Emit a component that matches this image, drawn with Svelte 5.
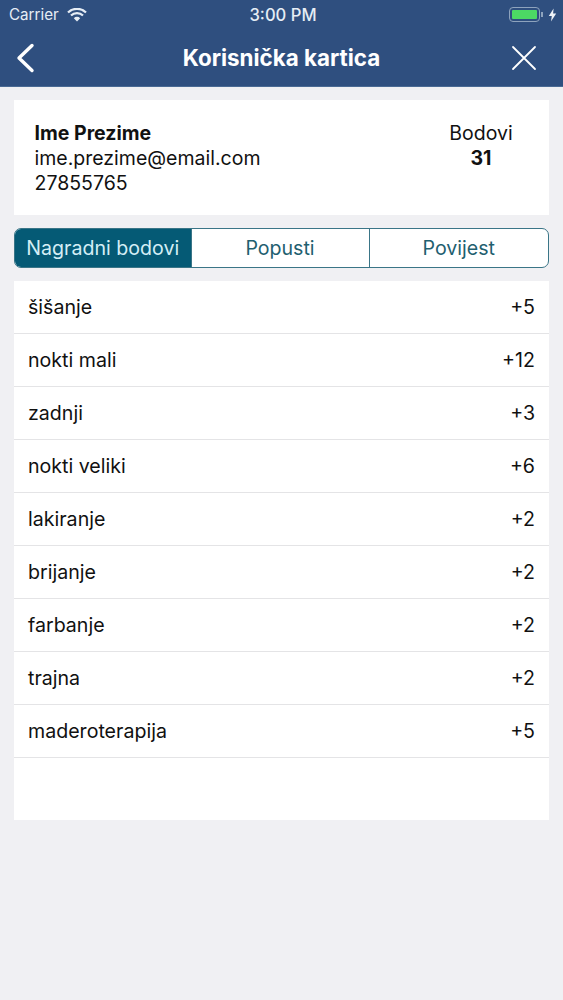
<script>
  let tabs = ['Nagradni bodovi', 'Popusti', 'Povijest'];
  let active = 0;

  let items = [
    { name: 'šišanje', pts: '+5' },
    { name: 'nokti mali', pts: '+12' },
    { name: 'zadnji', pts: '+3' },
    { name: 'nokti veliki', pts: '+6' },
    { name: 'lakiranje', pts: '+2' },
    { name: 'brijanje', pts: '+2' },
    { name: 'farbanje', pts: '+2' },
    { name: 'trajna', pts: '+2' },
    { name: 'maderoterapija', pts: '+5' }
  ];
</script>

<main>
  <header class="top">
    <div class="status">
      <div class="status__left">
        <span>Carrier</span>
        <svg width="20" height="14" viewBox="0 0 20 14">
          <path d="M1 4.6a12.6 12.6 0 0 1 18 0" fill="none" stroke="#e6edf5" stroke-width="2.2"/>
          <path d="M4 7.6a8.4 8.4 0 0 1 12 0" fill="none" stroke="#e6edf5" stroke-width="2.2"/>
          <path d="M6.8 10.2a4.4 4.4 0 0 1 6.4 0L10 13.4z" fill="#e6edf5"/>
        </svg>
      </div>
      <span class="status__time">3:00 PM</span>
      <div class="status__right">
        <div class="battery"><div class="battery__fill"></div></div>
        <div class="battery__nub"></div>
        <svg width="9" height="14" viewBox="0 0 9 14">
          <path d="M5.6 0.5L0.8 8h3L3 13.5 8.2 5.6h-3.1z" fill="#eef2f7"/>
        </svg>
      </div>
    </div>
    <div class="nav">
      <svg width="20" height="30" viewBox="0 0 20 30">
        <path d="M16 2.5L3 15l13 12.5" fill="none" stroke="#fff" stroke-width="3.4" stroke-linecap="round" stroke-linejoin="round"/>
      </svg>
      <h1>Korisnička kartica</h1>
      <svg class="nav__close" width="26" height="26" viewBox="0 0 26 26">
        <path d="M2 2l22 22M24 2L2 24" fill="none" stroke="#fff" stroke-width="1.8" stroke-linecap="round"/>
      </svg>
    </div>
  </header>

  <section class="user">
    <div class="user__info">
      <strong>Ime Prezime</strong>
      <span>ime.prezime@email.com</span>
      <span>27855765</span>
    </div>
    <div class="user__points">
      <span>Bodovi</span>
      <strong>31</strong>
    </div>
  </section>

  <div class="tabs">
    {#each tabs as tab, i}
      <button class="tab" class:tab--active={i === active} on:click={() => (active = i)}>{tab}</button>
    {/each}
  </div>

  <section class="list">
    {#each items as item}
      <div class="row">
        <span>{item.name}</span>
        <span>{item.pts}</span>
      </div>
    {/each}
  </section>
</main>

<style>
  :global(body) {
    background: #f0f0f3;
  }

  main {
    min-height: 1000px;
    background: #f0f0f3;
    font-family: Inter, "Liberation Sans", sans-serif;
    color: #111;
  }

  .top {
    background: #2f4f7f;
    height: 87px;
    box-sizing: border-box;
    color: #fff;
    border-bottom: 1px solid #4a6a94;
  }

  .status {
    height: 29px;
    display: grid;
    grid-template-columns: 1fr auto 1fr;
    align-items: center;
    padding: 0 6px 0 9px;
    font-size: 15.2px;
    color: #e6edf5;
  }

  .status__left {
    display: flex;
    align-items: center;
    gap: 8px;
  }

  .status__time {
    font-size: 16.6px;
    font-weight: 500;
  }

  .status__right {
    display: flex;
    align-items: center;
    justify-content: flex-end;
  }

  .battery {
    width: 31px;
    height: 15px;
    box-sizing: border-box;
    border: 1px solid #8ea3bd;
    border-radius: 4px;
    padding: 2px;
  }

  .battery__fill {
    height: 100%;
    background: #4cd964;
    border-radius: 1px;
  }

  .battery__nub {
    width: 2px;
    height: 5px;
    background: #8ea3bd;
    margin: 0 5px 0 1px;
  }

  .nav {
    height: 57px;
    display: grid;
    grid-template-columns: 1fr auto 1fr;
    align-items: center;
    padding: 0 16px;
  }

  .nav__close {
    justify-self: end;
    margin-right: 10px;
  }

  .nav h1 {
    margin: 0;
    font-size: 22.4px;
    font-weight: 700;
  }

  .user {
    margin: 13px 14px 0;
    height: 115px;
    box-sizing: border-box;
    background: #fff;
    padding: 21px 21px 0 20.5px;
    display: flex;
    justify-content: space-between;
    font-size: 19.5px;
    line-height: 25px;
  }

  .user__info {
    display: flex;
    flex-direction: column;
  }

  .user__points {
    display: flex;
    flex-direction: column;
    align-items: center;
    width: 64px;
    margin-right: 15px;
  }

  .tabs {
    margin: 13px 14px 0;
    height: 40px;
    box-sizing: border-box;
    display: grid;
    grid-template-columns: 175.5px 178px 1fr;
    border: 1.5px solid #3a7587;
    border-radius: 7px;
    background: #fff;
    overflow: hidden;
  }

  .tab {
    all: unset;
    text-align: center;
    font-size: 19.6px;
    color: #1f6070;
    border-left: 1.5px solid #3a7587;
  }

  .tab:first-child {
    border-left: 0;
  }

  .tab--active {
    background: #055a75;
    color: #d4eef5;
  }

  .list {
    margin: 13px 14px 0;
    height: 539px;
    background: #fff;
  }

  .row {
    height: 53px;
    box-sizing: border-box;
    padding: 0 14px 1px;
    display: flex;
    align-items: center;
    justify-content: space-between;
    font-size: 19.6px;
    border-bottom: 1px solid #e4e4e6;
  }
</style>
